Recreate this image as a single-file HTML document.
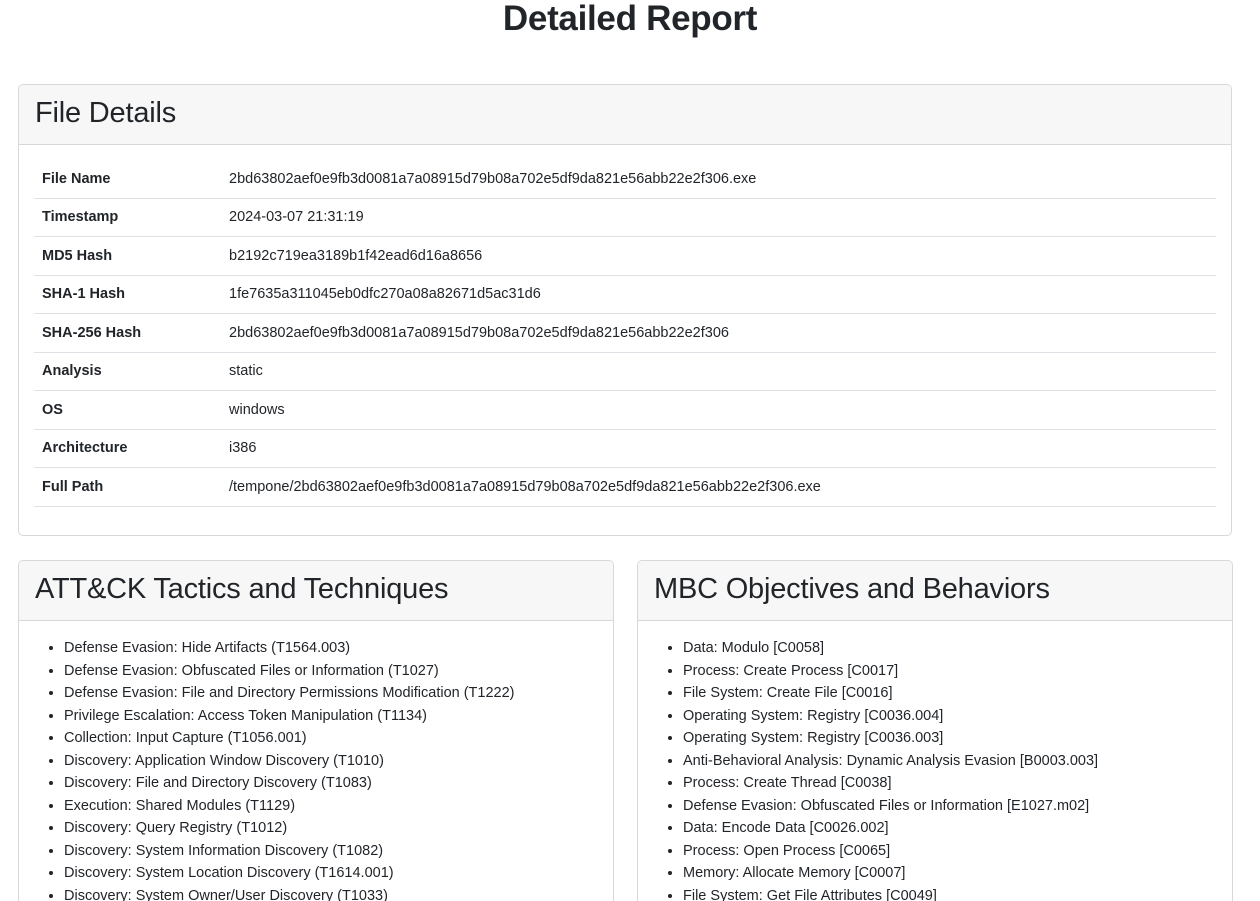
<!DOCTYPE html>
<html style="height:901px;overflow:hidden"><head><meta charset="utf-8"><style>
body{margin:0;font-family:"Liberation Sans",sans-serif;color:#212529;background:#fff;font-size:15px;overflow:hidden;height:901px;position:relative}
h1{margin:0;position:absolute;top:0;left:0;width:1260px;text-align:center;font-size:35px;line-height:38px;font-weight:bold;letter-spacing:-0.3px}
.card{position:absolute;border:1px solid #d8d8d8;border-radius:5px;background:#fff;overflow:hidden}
.hd{height:59px;background:#f7f7f7;border-bottom:1px solid #d8d8d8;padding-left:16px;font-size:29px;line-height:57px;letter-spacing:-0.2px}
table{border-collapse:collapse;margin:15px 15px 0 15px;width:1182px}
td{height:37.5px;padding:0 8px;border-bottom:1px solid #dee2e6;font-size:14.5px;vertical-align:middle}
td:first-child{font-weight:bold;width:171px}
ul{margin:16px 0 0 0;padding-left:45px;font-size:14.5px;line-height:22.5px}
li{white-space:nowrap}
</style></head><body>
<h1>Detailed Report</h1>
<div class="card" style="left:18px;top:84px;width:1212px;height:450px">
<div class="hd">File Details</div>
<table>
<tr><td>File Name</td><td>2bd63802aef0e9fb3d0081a7a08915d79b08a702e5df9da821e56abb22e2f306.exe</td></tr>
<tr><td>Timestamp</td><td>2024-03-07 21:31:19</td></tr>
<tr><td>MD5 Hash</td><td>b2192c719ea3189b1f42ead6d16a8656</td></tr>
<tr><td>SHA-1 Hash</td><td>1fe7635a311045eb0dfc270a08a82671d5ac31d6</td></tr>
<tr><td>SHA-256 Hash</td><td>2bd63802aef0e9fb3d0081a7a08915d79b08a702e5df9da821e56abb22e2f306</td></tr>
<tr><td>Analysis</td><td>static</td></tr>
<tr><td>OS</td><td>windows</td></tr>
<tr><td>Architecture</td><td>i386</td></tr>
<tr><td>Full Path</td><td>/tempone/2bd63802aef0e9fb3d0081a7a08915d79b08a702e5df9da821e56abb22e2f306.exe</td></tr>
</table>
</div>
<div class="card" style="left:18px;top:560px;width:594px;height:400px">
<div class="hd">ATT&amp;CK Tactics and Techniques</div>
<ul>
<li>Defense Evasion: Hide Artifacts (T1564.003)</li>
<li>Defense Evasion: Obfuscated Files or Information (T1027)</li>
<li>Defense Evasion: File and Directory Permissions Modification (T1222)</li>
<li>Privilege Escalation: Access Token Manipulation (T1134)</li>
<li>Collection: Input Capture (T1056.001)</li>
<li>Discovery: Application Window Discovery (T1010)</li>
<li>Discovery: File and Directory Discovery (T1083)</li>
<li>Execution: Shared Modules (T1129)</li>
<li>Discovery: Query Registry (T1012)</li>
<li>Discovery: System Information Discovery (T1082)</li>
<li>Discovery: System Location Discovery (T1614.001)</li>
<li>Discovery: System Owner/User Discovery (T1033)</li>
</ul>
</div>
<div class="card" style="left:637px;top:560px;width:594px;height:400px">
<div class="hd">MBC Objectives and Behaviors</div>
<ul>
<li>Data: Modulo [C0058]</li>
<li>Process: Create Process [C0017]</li>
<li>File System: Create File [C0016]</li>
<li>Operating System: Registry [C0036.004]</li>
<li>Operating System: Registry [C0036.003]</li>
<li>Anti-Behavioral Analysis: Dynamic Analysis Evasion [B0003.003]</li>
<li>Process: Create Thread [C0038]</li>
<li>Defense Evasion: Obfuscated Files or Information [E1027.m02]</li>
<li>Data: Encode Data [C0026.002]</li>
<li>Process: Open Process [C0065]</li>
<li>Memory: Allocate Memory [C0007]</li>
<li>File System: Get File Attributes [C0049]</li>
</ul>
</div>
</body></html>
